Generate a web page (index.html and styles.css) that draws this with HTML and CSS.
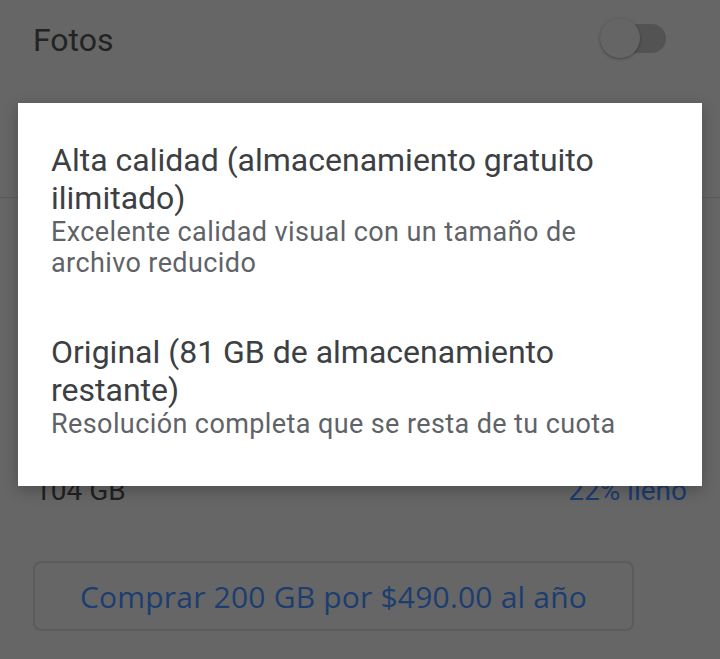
FILE: index.html
```html
<!DOCTYPE html>
<html lang="es">
<head>
<meta charset="utf-8">
<title>Calidad de subida</title>
<link rel="stylesheet" href="styles.css">
</head>
<body>
<div class="screen">
  <div class="settings">
    <div class="row-fotos">
      <span class="fotos-label">Fotos</span>
      <span class="switch"><span class="switch-track"></span><span class="switch-thumb"></span></span>
    </div>
    <div class="row-quality"></div>
    <div class="storage-row">
      <span class="storage-total">104 GB</span>
      <span class="storage-used">22% lleno</span>
    </div>
    <div class="buy-wrap">
      <button class="buy-btn">Comprar 200 GB por $490.00 al año</button>
    </div>
  </div>

  <div class="dialog">
    <div class="option">
      <div class="option-title">Alta calidad (almacenamiento gratuito ilimitado)</div>
      <div class="option-sub">Excelente calidad visual con un tamaño de archivo reducido</div>
    </div>
    <div class="option">
      <div class="option-title">Original (81 GB de almacenamiento restante)</div>
      <div class="option-sub">Resolución completa que se resta de tu cuota</div>
    </div>
  </div>
</div>
</body>
</html>
```

FILE: styles.css
```css
html, body {
  margin: 0;
  padding: 0;
}
body {
  background: #666666;
  font-family: Roboto, "Noto Sans", "Liberation Sans", sans-serif;
  width: 720px;
  height: 659px;
  overflow: hidden;
}
.screen {
  position: relative;
  width: 720px;
  height: 659px;
}
.settings {
  display: flex;
  flex-direction: column;
}
.row-fotos {
  display: flex;
  justify-content: space-between;
  align-items: flex-start;
  height: 100px;
  padding: 0 54px 0 33px;
}
.fotos-label {
  font-size: 32px;
  line-height: 37.5px;
  margin-top: 22px;
  color: #232323;
}
.switch {
  position: relative;
  display: block;
  width: 66px;
  height: 42px;
  margin-top: 18px;
}
.switch-track {
  position: absolute;
  right: 0;
  top: 6px;
  width: 52px;
  height: 29px;
  border-radius: 15px;
  background: #535353;
}
.switch-thumb {
  position: absolute;
  left: 0;
  top: 0;
  width: 40px;
  height: 40px;
  border-radius: 50%;
  background: #656565;
  box-shadow: 0 1px 3px rgba(0, 0, 0, 0.35);
}
.row-quality {
  height: 97px;
  border-bottom: 1px solid #5b5b5b;
}
.storage-row {
  display: flex;
  justify-content: space-between;
  margin-top: 276px;
  padding: 0 33px 0 35px;
  font-size: 28px;
  line-height: 33px;
}
.storage-total {
  color: #212121;
}
.storage-used {
  color: #1b3c70;
}
.buy-wrap {
  display: flex;
  padding: 0 0 0 33px;
  margin-top: 54px;
}
.buy-btn {
  width: 601px;
  height: 70px;
  box-sizing: border-box;
  border: 2px solid #5b5b5b;
  border-radius: 8px;
  background: transparent;
  color: #1c3d70;
  font-family: "Open Sans", Roboto, sans-serif;
  font-weight: 500;
  font-size: 30px;
  letter-spacing: 0.2px;
  padding: 0;
}
.dialog {
  position: absolute;
  left: 18px;
  top: 103px;
  width: 684px;
  box-sizing: border-box;
  padding: 39px 33px 46px;
  background: #ffffff;
  box-shadow: 0 4px 14px rgba(0, 0, 0, 0.25);
  display: flex;
  flex-direction: column;
  gap: 55px;
}
.option-title {
  font-size: 32px;
  line-height: 37.5px;
  color: #3c4043;
}
.option-sub {
  font-size: 27px;
  line-height: 31px;
  letter-spacing: 0.4px;
  color: #5f6368;
}
```
